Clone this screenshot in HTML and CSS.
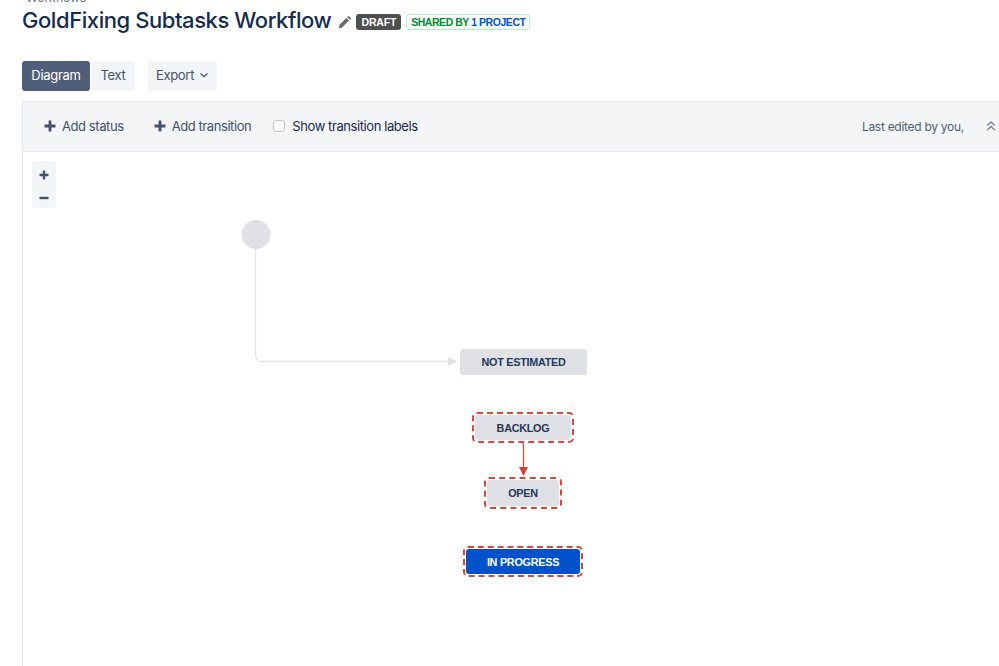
FILE: index.html
```html
<!DOCTYPE html>
<html lang="en">
<head>
<meta charset="utf-8">
<title>GoldFixing Subtasks Workflow</title>
<link rel="stylesheet" href="styles.css">
</head>
<body>
<div class="page">
  <div class="crumb"><span>Workflows</span></div>
  <header class="title-row">
    <h1>GoldFixing Subtasks Workflow</h1>
    <svg class="pencil" width="14" height="14" viewBox="0 0 14 14"><path d="M10.500 .8l2.700 2.700-1.300 1.300-2.700-2.700zM8.300 2.900L11 5.600l-6.800 6.800-3.500.9.900-3.500z" fill="#6b6b6b"/></svg>
    <span class="lozenge draft">DRAFT</span>
    <span class="lozenge shared">SHARED BY <b>1 PROJECT</b></span>
  </header>
  <nav class="tabs">
    <div class="group">
      <button class="btn active">Diagram</button>
      <button class="btn text-tab">Text</button>
    </div>
    <button class="btn export">Export
      <svg width="10" height="10" viewBox="0 0 10 10"><path d="M1.500 3.500L5 6.500l3.500-3" fill="none" stroke="#505f79" stroke-width="1.500"/></svg>
    </button>
  </nav>
  <section class="designer">
    <div class="toolbar">
      <span class="tool"><svg width="12" height="12" viewBox="0 0 12 12"><path d="M6 .5v11M.5 6h11" stroke="#42526e" stroke-width="2.800"/></svg>Add status</span>
      <span class="tool"><svg width="12" height="12" viewBox="0 0 12 12"><path d="M6 .5v11M.5 6h11" stroke="#42526e" stroke-width="2.800"/></svg>Add transition</span>
      <label class="check"><span class="box"></span>Show transition labels</label>
      <span class="edited">Last edited by you,</span>
      <svg class="collapse" width="10" height="12" viewBox="0 0 10 12"><path d="M1.200 5.500L5 2l3.800 3.500M1.200 10L5 6.500 8.800 10" fill="none" stroke="#7a869a" stroke-width="1.600"/></svg>
    </div>
    <div class="canvas">
      <div class="zoom">
        <svg width="10" height="10" viewBox="0 0 10 10"><path d="M5 .5v9M.5 5h9" stroke="#42526e" stroke-width="2.400"/></svg>
        <svg width="10" height="10" viewBox="0 0 10 10"><path d="M.5 5h9" stroke="#42526e" stroke-width="2.400"/></svg>
      </div>
      <svg class="wires" width="977" height="514" viewBox="0 0 977 514">
        <circle cx="233" cy="82.500" r="14.500" fill="#dfe1e6"/>
        <path d="M232.500 97V203.500a6 6 0 0 0 6 6H428" fill="none" stroke="#e1e3e8" stroke-width="1.300"/>
        <path d="M425 205l9 4.500-9 4.500z" fill="#dfe1e6"/>
        <path d="M500.500 291v25" stroke="#d9584d" stroke-width="1.400"/>
        <path d="M496 315h9l-4.500 9z" fill="#d04437"/>
      </svg>
      <div class="node plain n-est">NOT ESTIMATED</div>
      <div class="ring r-back"><div class="node plain">BACKLOG</div></div>
      <div class="ring r-open"><div class="node plain">OPEN</div></div>
      <div class="ring r-prog"><div class="node blue">IN PROGRESS</div></div>
    </div>
  </section>
</div>
</body>
</html>
```
FILE: styles.css
```css
* { box-sizing: border-box; }
html, body { margin: 0; height: 100%; overflow: hidden; background: #fff; }
body { font-family: Inter, "Liberation Sans", sans-serif; color: #172b4d; }
.page { padding-left: 22px; height: 666px; display: flex; flex-direction: column; }
.crumb { height: 6px; overflow: hidden; font-size: 12px; color: #6b778c; padding-left: 4px; }
.crumb span { display: block; margin-top: -9px; line-height: 14px; }
.title-row { display: flex; align-items: center; height: 28px; }
h1 { margin: 0; font-size: 22px; letter-spacing: -.43px; font-weight: 500; color: #172b4d; white-space: nowrap; line-height: 28px; }
.pencil { margin: 4px 0 0 7px; }
.lozenge { font-family: "Liberation Sans", sans-serif; font-weight: 700; height: 16px; line-height: 16px; border-radius: 3px; margin-top: 4px; white-space: nowrap; }
.draft { background: #505050; color: #fff; font-size: 10.500px; letter-spacing: -.2px; margin-left: 4px; width: 45px; text-align: center; }
.shared { font-size: 10.500px; letter-spacing: -.45px; width: 124px; margin-left: 5px; text-align: center; line-height: 14px; border: 1px solid #abf5c1; color: #008a2e; }
.shared b { color: #0052cc; }
.tabs { display: flex; margin-top: 27px; height: 30px; }
.group { display: flex; gap: 1px; }
.btn { font: 400 13px Inter, "Liberation Sans", sans-serif; letter-spacing: -.3px; border: 0; border-radius: 3px; background: #f4f5f7; color: #42526e; height: 30px; padding: 0 0 2px; }
.active { width: 68px; background: #505f79; color: #fff; }
.text-tab { width: 44px; }
.export { width: 69px; margin-left: 13px; display: flex; align-items: center; justify-content: center; gap: 5px; }
.designer { margin-top: 10px; flex: 1; display: flex; flex-direction: column; min-height: 0; }
.toolbar { height: 51px; background: #f4f5f7; border: 1px solid #e6e8ec; border-right: 0; display: flex; align-items: center; font-size: 13px; letter-spacing: -.42px; color: #42526e; padding: 0 0 1px 21px; white-space: nowrap; }
.tool { display: inline-flex; align-items: center; gap: 6px; margin-right: 30px; }
.tool + .tool { margin-right: 22px; }
.check { display: inline-flex; align-items: center; gap: 7px; color: #172b4d; }
.box { width: 12px; height: 12px; background: #fff; border: 1px solid #c1c7d0; border-radius: 3px; }
.edited { margin-left: auto; color: #505f79; font-size: 12px; letter-spacing: -.28px; }
.collapse { margin: 0 3px 0 22px; }
.canvas { position: relative; flex: 1; border-left: 1px solid #e6e8ec; }
.zoom { position: absolute; left: 9px; top: 9px; width: 24px; height: 47px; background: #f4f5f7; border-radius: 3px; display: flex; flex-direction: column; align-items: center; gap: 13px; padding: 9px 0 0; }
.wires { position: absolute; left: 0; top: 0; }
.node { font-family: "Liberation Sans", sans-serif; font-size: 10.800px; letter-spacing: -.25px; font-weight: 700; height: 100%; border-radius: 3px; display: flex; align-items: center; justify-content: center; white-space: nowrap; }
.plain { background: #dfe1e6; color: #253858; }
.blue { background: #0052cc; color: #fff; }
.n-est { position: absolute; left: 437px; top: 197px; width: 127px; height: 26px; }
.ring { position: absolute; border: 2px dashed #d9463a; border-radius: 5px; padding: 1px; }
.r-back { left: 449px; top: 260px; width: 102px; height: 31px; }
.r-open { left: 461px; top: 325px; width: 78px; height: 32px; }
.r-prog { left: 440px; top: 394px; width: 120px; height: 31px; }
```
